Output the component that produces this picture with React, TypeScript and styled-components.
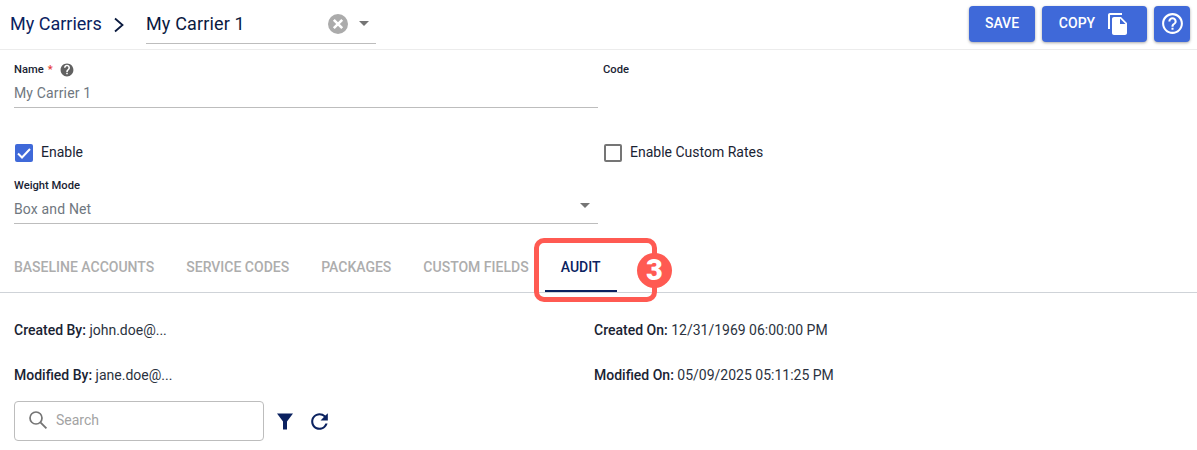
import React from "react";
import styled, { createGlobalStyle } from "styled-components";

const Global = createGlobalStyle`
  html, body { margin: 0; padding: 0; background: #fff; }
  body { font-family: Roboto, "Liberation Sans", sans-serif; width: 1197px; height: 450px; overflow: hidden; }
`;

const Page = styled.div`
  position: relative;
  width: 1197px;
  height: 450px;
  overflow: hidden;
`;

const Header = styled.header`
  height: 49px;
  border-bottom: 1px solid #ececec;
  display: flex;
  align-items: flex-start;
  justify-content: space-between;
  padding: 0 7px 0 10px;
`;

const Crumbs = styled.div`
  display: flex;
  align-items: flex-start;
`;

const CrumbLink = styled.span`
  font-size: 18px;
  line-height: 24px;
  margin-top: 12px;
  color: #0b2260;
  width: 100px;
`;

const Chevron = styled.svg`
  width: 12px;
  height: 16px;
  margin: 17px 0 0 3px;
`;

const CarrierSelect = styled.div`
  width: 230px;
  height: 44px;
  margin-left: 21px;
  border-bottom: 1px solid #bdbdbd;
  display: flex;
  align-items: center;
  font-size: 18px;
  letter-spacing: 0.15px;
  color: #0a1a3f;
  padding-bottom: 1px;
  box-sizing: border-box;
`;

const CarrierValue = styled.span`
  flex: 1;
  line-height: 24px;
  margin-top: 6px;
`;

const ClearIcon = styled.svg`
  width: 20px;
  height: 20px;
  margin: 6px 0 0 0;
`;

const Caret = styled.span`
  width: 0;
  height: 0;
  border-left: 5px solid transparent;
  border-right: 5px solid transparent;
  border-top: 5px solid #757575;
`;

const HeaderCaret = styled(Caret)`
  margin: 5px 7px 0 11px;
`;

const FieldCaret = styled(Caret)`
  margin-bottom: 8px;
`;

const Actions = styled.div`
  display: flex;
  gap: 7px;
  margin-top: 6px;
`;

const ActionButton = styled.button<{ $w: number }>`
  width: ${(p) => p.$w}px;
  height: 36px;
  border: 0;
  border-radius: 4px;
  background: #3f69d9;
  color: #fff;
  font-family: inherit;
  font-size: 14px;
  font-weight: 500;
  line-height: 34px;
  padding: 0 0 2px;
  display: flex;
  align-items: center;
  justify-content: center;
  box-shadow: 0 1px 3px rgba(0, 0, 0, 0.35);
`;

const CopyIcon = styled.svg`
  width: 24px;
  height: 24px;
  margin: 2px 0 0 11px;
`;

const HelpIcon = styled.svg`
  width: 25px;
  height: 25px;
`;

const FormGrid = styled.section`
  display: grid;
  grid-template-columns: 584px 1fr;
  column-gap: 5px;
  padding: 0 0 0 14px;
`;

const Field = styled.div`
  display: flex;
  flex-direction: column;
  height: 58px;
`;

const FieldLabel = styled.label`
  display: flex;
  align-items: center;
  height: 14px;
  margin-top: 13px;
  font-size: 11.2px;
  font-weight: 500;
  line-height: 14px;
  color: #1a2333;
`;

const Required = styled.span`
  color: #e53935;
  margin-left: 4px;
`;

const InfoIcon = styled.svg`
  width: 14px;
  height: 14px;
  margin-left: 7px;
`;

const FieldValue = styled.div`
  height: 31px;
  box-sizing: border-box;
  padding: 2px 8px 0 0;
  font-size: 14px;
  letter-spacing: 0.15px;
  color: #6f7780;
  border-bottom: 1px solid #bdbdbd;
  display: flex;
  align-items: center;
  justify-content: space-between;
`;

const CheckRow = styled.div`
  display: flex;
  align-items: center;
  height: 20px;
  margin-top: 35px;
  font-size: 14px;
  color: #1a2333;
`;

const CheckLabel = styled.span`
  padding-bottom: 2px;
`;

const CheckedBox = styled.span`
  width: 18px;
  height: 18px;
  border-radius: 2px;
  background: #3f69d9;
  margin: 0 8px 0 1px;
`;

const CheckMark = styled.svg`
  display: block;
  width: 18px;
  height: 18px;
`;

const EmptyBox = styled.span`
  width: 14px;
  height: 14px;
  border: 2px solid #757575;
  border-radius: 2px;
  margin: 0 8px 0 1px;
`;

const WeightField = styled(Field)`
  margin-top: 3px;
  height: 58px;
  grid-column: 1;
`;

const Tabs = styled.nav`
  display: flex;
  height: 49px;
  margin-top: 19px;
  border-bottom: 1px solid #cfd3d8;
  box-sizing: content-box;
`;

const Tab = styled.div<{ $active?: boolean }>`
  padding: 0 16px;
  height: 49px;
  line-height: 49px;
  box-sizing: border-box;
  font-size: 14px;
  font-weight: 500;
  color: ${(p) => (p.$active ? "#0b2260" : "#adadad")};
  border-bottom: ${(p) => (p.$active ? "2px solid #0b2260" : "none")};
  min-width: ${(p) => (p.$active ? "72px" : "0")};
  text-align: center;
  &:first-child { margin-left: -2px; }
`;

const Meta = styled.section`
  display: grid;
  grid-template-columns: 580px 1fr;
  grid-auto-rows: 45px;
  padding: 15px 0 0 14px;
`;

const MetaItem = styled.div`
  font-size: 14px;
  line-height: 45px;
  height: 45px;
  color: #2b3240;
  b { font-weight: 500; color: #1a2333; }
`;

const Toolbar = styled.div`
  display: flex;
  align-items: center;
  margin: 3px 0 0 14px;
`;

const SearchBox = styled.div`
  width: 250px;
  height: 40px;
  box-sizing: border-box;
  border: 1px solid #bdbdbd;
  border-radius: 4px;
  display: flex;
  align-items: center;
  padding: 0 0 2px 13px;
  font-size: 14px;
  color: #a3a3a3;
`;

const SearchIcon = styled.svg`
  width: 20px;
  height: 20px;
  margin-right: 8px;
`;

const FilterIcon = styled.svg`
  width: 18px;
  height: 18px;
  margin-left: 12px;
`;

const RefreshIcon = styled.svg`
  width: 25px;
  height: 25px;
  margin-left: 13px;
`;

const Callout = styled.div`
  position: absolute;
  left: 534px;
  top: 238px;
  width: 123px;
  height: 64px;
  box-sizing: border-box;
  border: 5px solid #ff5a52;
  border-radius: 10px;
`;

const Badge = styled.div`
  position: absolute;
  left: 637px;
  top: 253px;
  width: 35px;
  height: 35px;
  border-radius: 50%;
  background: #ff5a52;
  color: #fff;
  font-family: Roboto, sans-serif;
  font-size: 29px;
  font-weight: 900;
  line-height: 35px;
  text-align: center;
`;

export default function App() {
  return (
    <Page>
      <Global />
      <Header>
        <Crumbs>
          <CrumbLink>My Carriers</CrumbLink>
          <Chevron viewBox="0 0 12 16">
            <path d="M2 1.5 L9.5 8 L2 14.5" fill="none" stroke="#0a1a3f" strokeWidth="1.8" />
          </Chevron>
          <CarrierSelect>
            <CarrierValue>My Carrier 1</CarrierValue>
            <ClearIcon viewBox="0 0 20 20">
              <circle cx="10" cy="10" r="10" fill="#ababab" />
              <path d="M5.8 5.8 L14.2 14.2 M14.2 5.8 L5.8 14.2" stroke="#fff" strokeWidth="2.6" />
            </ClearIcon>
            <HeaderCaret />
          </CarrierSelect>
        </Crumbs>
        <Actions>
          <ActionButton $w={66}>SAVE</ActionButton>
          <ActionButton $w={105}>
            COPY
            <CopyIcon viewBox="0 0 24 24">
              <path
                fill="#fff"
                d="M16 1H4c-1.1 0-2 .9-2 2v14h2V3h12V1zm-1 4l6 6v10c0 1.1-.9 2-2 2H7.99C6.89 23 6 22.1 6 21l.01-14c0-1.1.89-2 1.99-2h7zm-1 7h5.5L14 6.5V12z"
              />
            </CopyIcon>
          </ActionButton>
          <ActionButton $w={36}>
            <HelpIcon viewBox="0 0 24 24">
              <path
                fill="#fff"
                d="M11 18h2v-2h-2v2zm1-16C6.48 2 2 6.48 2 12s4.48 10 10 10 10-4.48 10-10S17.52 2 12 2zm0 18c-4.41 0-8-3.59-8-8s3.59-8 8-8 8 3.59 8 8-3.59 8-8 8zm0-14c-2.21 0-4 1.79-4 4h2c0-1.1.9-2 2-2s2 .9 2 2c0 2-3 1.75-3 5h2c0-2.25 3-2.5 3-5 0-2.21-1.79-4-4-4z"
              />
            </HelpIcon>
          </ActionButton>
        </Actions>
      </Header>

      <FormGrid>
        <Field>
          <FieldLabel>
            Name <Required>*</Required>
            <InfoIcon viewBox="0 0 24 24">
              <path
                fill="#616161"
                d="M12 1C5.9 1 1 5.9 1 12s4.9 11 11 11 11-4.9 11-11S18.1 1 12 1zm1.3 18.2h-2.6v-2.6h2.6v2.6zm2.7-8.1l-1.1 1.2c-1 .9-1.6 1.7-1.6 3.1h-2.6v-.6c0-1.2.6-2.3 1.5-3.2l1.6-1.6c.5-.5.7-1.1.7-1.8 0-1.4-1.1-2.5-2.5-2.5S9.5 6.8 9.5 8.2H6.9c0-2.9 2.3-5.1 5.1-5.1s5.1 2.2 5.1 5.1c0 1.1-.5 2.2-1.1 2.9z"
              />
            </InfoIcon>
          </FieldLabel>
          <FieldValue>My Carrier 1</FieldValue>
        </Field>
        <Field>
          <FieldLabel>Code</FieldLabel>
        </Field>
        <CheckRow>
          <CheckedBox>
            <CheckMark viewBox="0 0 18 18">
              <path d="M3 9.5 L7 13.5 L15 5" fill="none" stroke="#fff" strokeWidth="2" />
            </CheckMark>
          </CheckedBox>
          <CheckLabel>Enable</CheckLabel>
        </CheckRow>
        <CheckRow>
          <EmptyBox />
          <CheckLabel>Enable Custom Rates</CheckLabel>
        </CheckRow>
        <WeightField>
          <FieldLabel>Weight Mode</FieldLabel>
          <FieldValue>
            Box and Net
            <FieldCaret />
          </FieldValue>
        </WeightField>
      </FormGrid>

      <Tabs>
        <Tab>BASELINE ACCOUNTS</Tab>
        <Tab>SERVICE CODES</Tab>
        <Tab>PACKAGES</Tab>
        <Tab>CUSTOM FIELDS</Tab>
        <Tab $active>AUDIT</Tab>
      </Tabs>

      <Meta>
        <MetaItem><b>Created By:</b> john.doe@...</MetaItem>
        <MetaItem><b>Created On:</b> 12/31/1969 06:00:00 PM</MetaItem>
        <MetaItem><b>Modified By:</b> jane.doe@...</MetaItem>
        <MetaItem><b>Modified On:</b> 05/09/2025 05:11:25 PM</MetaItem>
      </Meta>

      <Toolbar>
        <SearchBox>
          <SearchIcon viewBox="0 0 20 20">
            <circle cx="8" cy="8" r="6" fill="none" stroke="#757575" strokeWidth="1.7" />
            <path d="M12.4 12.4 L18.4 18.4" stroke="#757575" strokeWidth="1.9" />
          </SearchIcon>
          Search
        </SearchBox>
        <FilterIcon viewBox="0 0 18 18">
          <path d="M1 1.5 H17 L11 9.5 V17.5 H7 V9.5 Z" fill="#0b2260" />
        </FilterIcon>
        <RefreshIcon viewBox="0 0 24 24">
          <path
            fill="#0b2260"
            d="M17.65 6.35A7.958 7.958 0 0 0 12 4c-4.42 0-7.99 3.58-7.99 8s3.57 8 7.99 8c3.73 0 6.84-2.55 7.73-6h-2.08A5.99 5.99 0 0 1 12 18c-3.31 0-6-2.69-6-6s2.69-6 6-6c1.66 0 3.14.69 4.22 1.78L13 11h7V4l-2.35 2.35z"
          />
        </RefreshIcon>
      </Toolbar>

      <Callout />
      <Badge>3</Badge>
    </Page>
  );
}
